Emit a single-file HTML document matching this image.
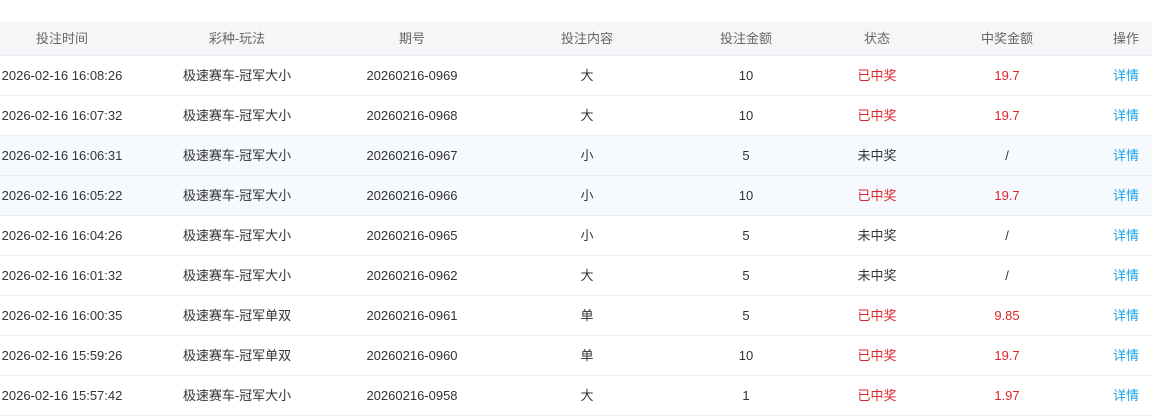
<!DOCTYPE html>
<html><head><meta charset="utf-8"><style>
body{margin:0;width:1152px;height:416px;background:#fff;overflow:hidden;font-family:"Liberation Sans","Noto Sans CJK SC",sans-serif;font-size:13px;color:#333}
.row{position:absolute;left:0;width:1152px;height:40px;border-bottom:1px solid #ebeef5;box-sizing:border-box}
.hd{top:22px;height:34px;background:#f5f6f8;color:#666;border-bottom:1px solid #ebeef5}
.c{position:absolute;top:0;line-height:39px;width:200px;margin-left:-100px;text-align:center;white-space:nowrap}
.hd .c{line-height:33px}
.r{color:#e0252b}.b{color:#1ba1e6}
.t{background:#f6f9fd}
</style></head><body>
<div class="row hd"><span class="c" style="left:62px">投注时间</span><span class="c" style="left:237px">彩种-玩法</span><span class="c" style="left:412px">期号</span><span class="c" style="left:587px">投注内容</span><span class="c" style="left:746px">投注金额</span><span class="c" style="left:877px">状态</span><span class="c" style="left:1007px">中奖金额</span><span class="c" style="left:1126px">操作</span></div>
<div id="rows"></div>
<script>
var d=[["16:08:26","冠军大小","0969","大","10",1,"19.7"],["16:07:32","冠军大小","0968","大","10",1,"19.7"],["16:06:31","冠军大小","0967","小","5",0,"/"],["16:05:22","冠军大小","0966","小","10",1,"19.7"],["16:04:26","冠军大小","0965","小","5",0,"/"],["16:01:32","冠军大小","0962","大","5",0,"/"],["16:00:35","冠军单双","0961","单","5",1,"9.85"],["15:59:26","冠军单双","0960","单","10",1,"19.7"],["15:57:42","冠军大小","0958","大","1",1,"1.97"]];
var h="";d.forEach(function(r,i){var w=r[5];h+='<div class="row'+((i==2||i==3)?' t':'')+'" style="top:'+(56+i*40)+'px"><span class="c" style="left:62px">2026-02-16 '+r[0]+'</span><span class="c" style="left:237px">极速赛车-'+r[1]+'</span><span class="c" style="left:412px">20260216-'+r[2]+'</span><span class="c" style="left:587px">'+r[3]+'</span><span class="c" style="left:746px">'+r[4]+'</span><span class="c'+(w?' r':'')+'" style="left:877px">'+(w?'已中奖':'未中奖')+'</span><span class="c'+(w?' r':'')+'" style="left:1007px">'+r[6]+'</span><span class="c b" style="left:1126px">详情</span></div>';});
document.getElementById("rows").innerHTML=h;
</script>
</body></html>
